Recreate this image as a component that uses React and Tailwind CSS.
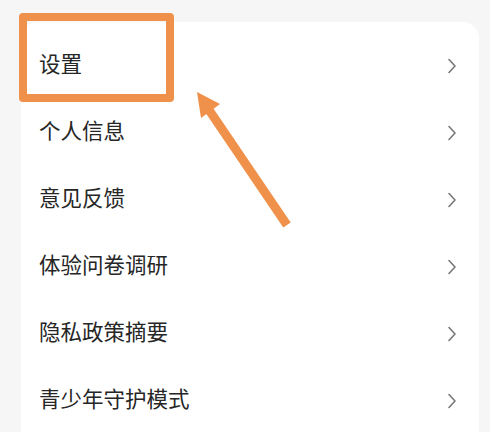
import React from "react";

const items = ["设置", "个人信息", "意见反馈", "体验问卷调研", "隐私政策摘要", "青少年守护模式"];

function Chevron() {
  return (
    <svg width="10" height="16" viewBox="0 0 10 16" fill="none">
      <path d="M2 1.5 L8 8 L2 14.5" stroke="#777777" strokeWidth="1.6" strokeLinecap="round" strokeLinejoin="round" />
    </svg>
  );
}

export default function App() {
  return (
    <div
      className="relative w-[490px] h-[432px] overflow-hidden bg-[#f6f6f6] pl-[21px] pt-[22px]"
      style={{ fontFamily: '"Noto Sans CJK SC", "Noto Sans", sans-serif' }}
    >
      <div className="w-[458px] h-[440px] bg-white rounded-[16px] pt-[10px] pl-[18px] pr-[22px]">
        {items.map((t) => (
          <div key={t} className="h-[67px] flex items-center justify-between">
            <span className="text-[21.5px] leading-none text-[#262626] mb-[5px]">{t}</span>
            <Chevron />
          </div>
        ))}
      </div>
      <div className="absolute left-[19px] top-[13px] w-[155px] h-[89px] border-[8px] border-[#ef914a] rounded-[4px]" />
      <svg className="absolute left-0 top-0" width="490" height="432" viewBox="0 0 490 432">
        <line x1="207" y1="107" x2="287" y2="225" stroke="#ef914a" strokeWidth="9" />
        <polygon points="197,92 220,104 201,118" fill="#ef914a" />
      </svg>
    </div>
  );
}
